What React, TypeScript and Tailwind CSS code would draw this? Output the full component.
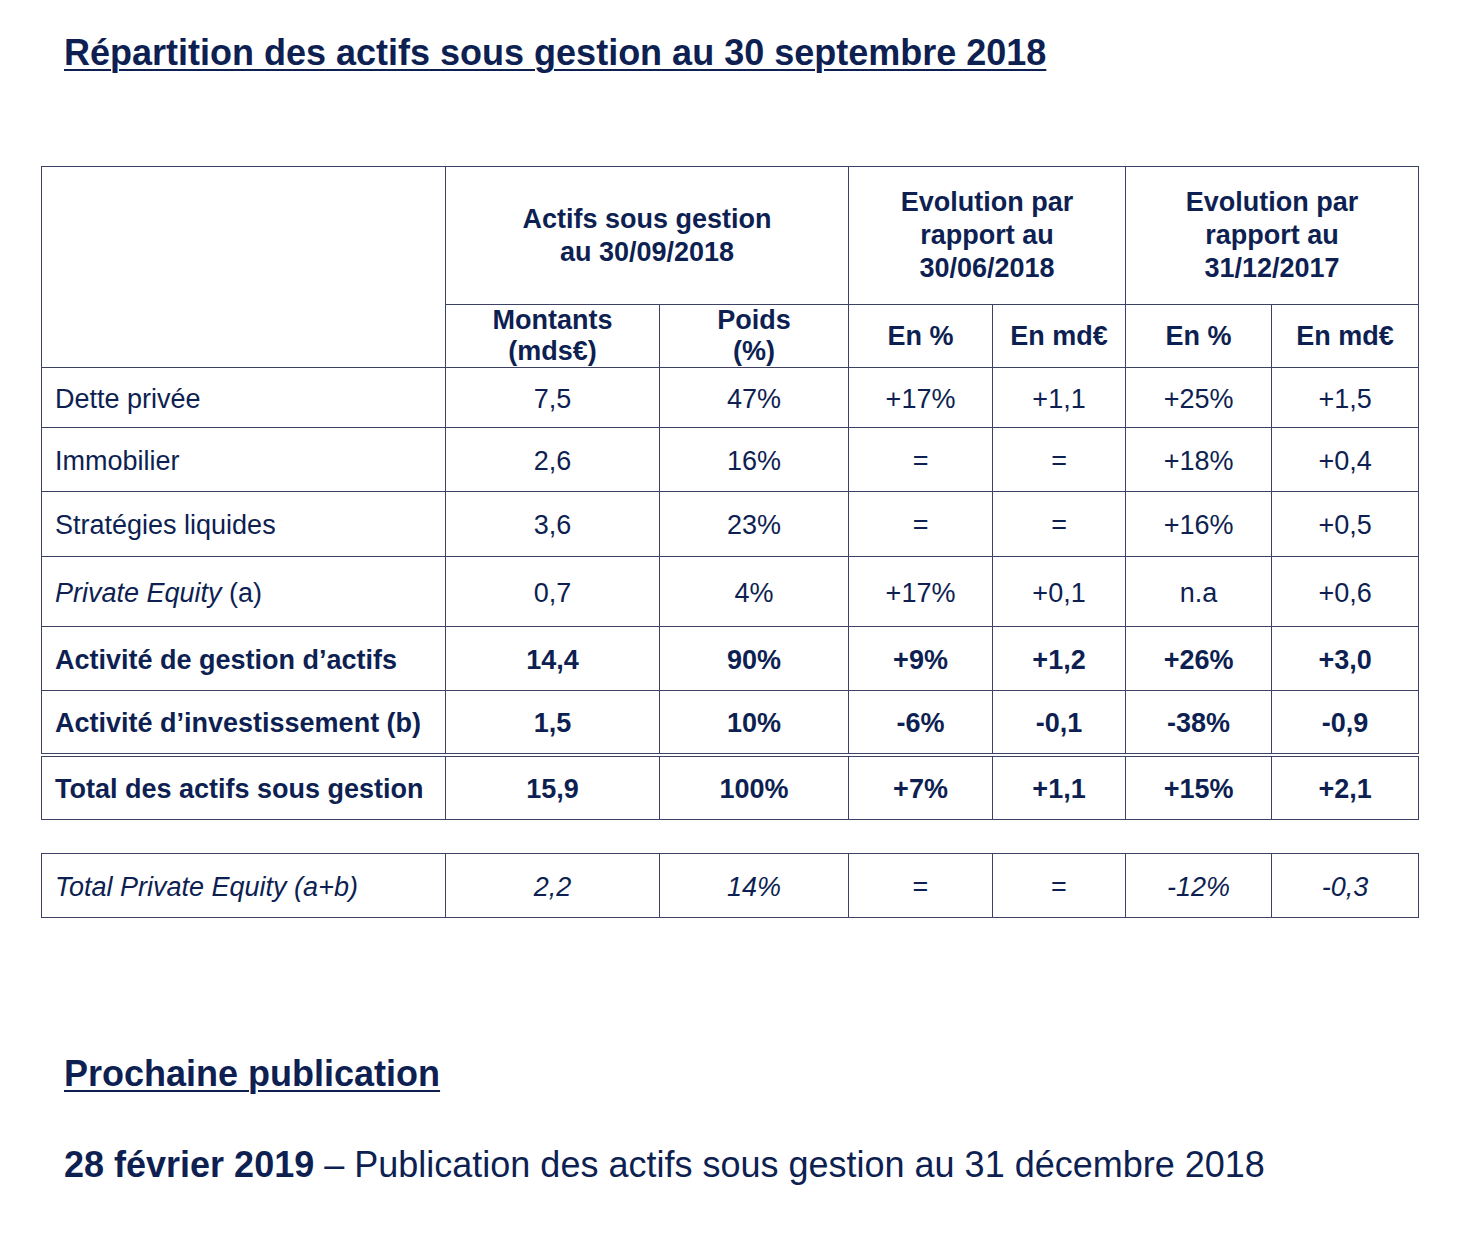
// Répartition des actifs sous gestion – tableau récapitulatif

const rows = [
  { label: 'Dette privée', values: ['7,5', '47%', '+17%', '+1,1', '+25%', '+1,5'], h: 'h-[60px]' },
  { label: 'Immobilier', values: ['2,6', '16%', '=', '=', '+18%', '+0,4'], h: 'h-[64px]' },
  { label: 'Stratégies liquides', values: ['3,6', '23%', '=', '=', '+16%', '+0,5'], h: 'h-[65px]' },
  { label: 'pe', values: ['0,7', '4%', '+17%', '+0,1', 'n.a', '+0,6'], h: 'h-[70px]' },
  { label: 'Activité de gestion d’actifs', values: ['14,4', '90%', '+9%', '+1,2', '+26%', '+3,0'], h: 'h-[64px]', bold: true },
  { label: 'Activité d’investissement (b)', values: ['1,5', '10%', '-6%', '-0,1', '-38%', '-0,9'], h: 'h-[64px]', bold: true, double: true },
  { label: 'Total des actifs sous gestion', values: ['15,9', '100%', '+7%', '+1,1', '+15%', '+2,1'], h: 'h-[65px]', bold: true },
];

const cell = 'border border-[#3d4166] text-center align-middle p-0';
const bodyCell = 'border border-[#3d4166] text-center align-middle px-0 pb-0 pt-[3px]';

function Cols() {
  return (
    <colgroup>
      <col className="w-[404px]" />
      <col className="w-[214px]" />
      <col className="w-[189px]" />
      <col className="w-[144px]" />
      <col className="w-[133px]" />
      <col className="w-[146px]" />
      <col className="w-[147px]" />
    </colgroup>
  );
}

export default function App() {
  return (
    <div className="min-h-[1250px] bg-white text-[#0e1f52] font-['Liberation_Sans',Arial,sans-serif]">
      <div className="pl-[64px] pt-[31px]">
        <h1 className="text-[36px] font-bold leading-[44px] underline decoration-[2px] underline-offset-[4px]">
          Répartition des actifs sous gestion au 30 septembre 2018
        </h1>
      </div>

      <div className="pl-[41px] pt-[91px]">
        <table className="table-fixed border-collapse w-[1378px] text-[27px] leading-[33px]">
          <Cols />
          <thead>
            <tr className="h-[138px] font-bold">
              <th rowSpan={2} className={cell}></th>
              <th colSpan={2} className={cell}>
                Actifs sous gestion
                <br />
                au 30/09/2018
              </th>
              <th colSpan={2} className={cell}>
                Evolution par
                <br />
                rapport au
                <br />
                30/06/2018
              </th>
              <th colSpan={2} className={cell}>
                Evolution par
                <br />
                rapport au
                <br />
                31/12/2017
              </th>
            </tr>
            <tr className="h-[63px] font-bold">
              <th className={`${cell} leading-[31px]`}>
                Montants
                <br />
                (mds€)
              </th>
              <th className={`${cell} leading-[31px]`}>
                Poids
                <br />
                (%)
              </th>
              <th className={cell}>En %</th>
              <th className={cell}>En md€</th>
              <th className={cell}>En %</th>
              <th className={cell}>En md€</th>
            </tr>
          </thead>
          <tbody>
            {rows.map((r) => (
              <tr
                key={r.label}
                className={`${r.h} ${r.bold ? 'font-bold' : ''} ${r.double ? '[&>td]:border-b-[4px] [&>td]:border-double' : ''}`}
              >
                <td className={`${bodyCell} text-left pl-[13px]`}>
                  {r.label === 'pe' ? (
                    <>
                      <i>Private Equity</i> (a)
                    </>
                  ) : (
                    r.label
                  )}
                </td>
                {r.values.map((v, i) => (
                  <td key={i} className={bodyCell}>
                    {v}
                  </td>
                ))}
              </tr>
            ))}
          </tbody>
        </table>

        <table className="table-fixed border-collapse w-[1378px] text-[27px] leading-[33px] italic mt-[33px]">
          <Cols />
          <tbody>
            <tr className="h-[64px]">
              <td className={`${bodyCell} text-left pl-[13px]`}>Total Private Equity (a+b)</td>
              {['2,2', '14%', '=', '=', '-12%', '-0,3'].map((v, i) => (
                <td key={i} className={`${bodyCell} ${v === '=' ? 'not-italic' : ''}`}>
                  {v}
                </td>
              ))}
            </tr>
          </tbody>
        </table>
      </div>

      <div className="pl-[64px] pt-[134px]">
        <h2 className="text-[36px] font-bold leading-[44px] underline decoration-[2px] underline-offset-[4px]">
          Prochaine publication
        </h2>
        <p className="mt-[48px] text-[36px] leading-[42px]">
          <span className="font-bold">28 février 2019</span> – Publication des actifs sous gestion au 31 décembre 2018
        </p>
      </div>
    </div>
  );
}
